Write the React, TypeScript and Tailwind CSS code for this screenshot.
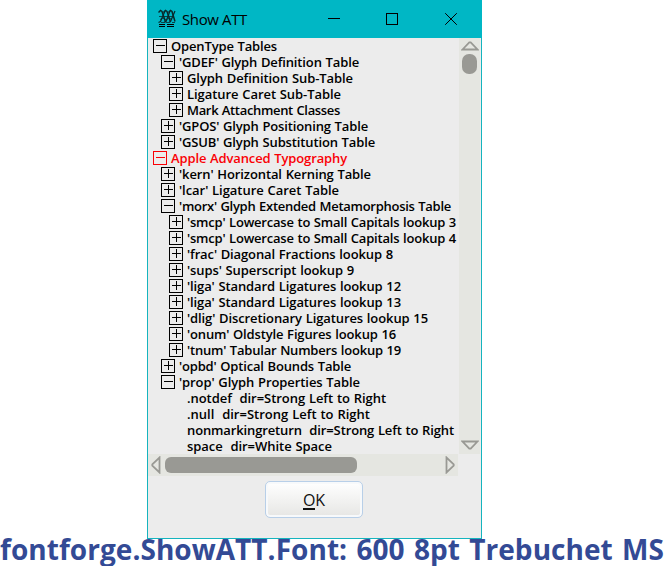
import { useLayoutEffect, useRef, useState } from "react";

type Row = { text: string; depth: number; width: number; state: "open" | "closed" | "leaf"; selected?: boolean };

const rows: Row[] = [
  { text: "OpenType Tables", depth: 0, width: 106, state: "open" },
  { text: "'GDEF' Glyph Definition Table", depth: 1, width: 180, state: "open" },
  { text: "Glyph Definition Sub-Table", depth: 2, width: 166, state: "closed" },
  { text: "Ligature Caret Sub-Table", depth: 2, width: 154, state: "closed" },
  { text: "Mark Attachment Classes", depth: 2, width: 153, state: "closed" },
  { text: "'GPOS' Glyph Positioning Table", depth: 1, width: 189, state: "closed" },
  { text: "'GSUB' Glyph Substitution Table", depth: 1, width: 196, state: "closed" },
  { text: "Apple Advanced Typography", depth: 0, width: 176, state: "open", selected: true },
  { text: "'kern' Horizontal Kerning Table", depth: 1, width: 192, state: "closed" },
  { text: "'lcar' Ligature Caret Table", depth: 1, width: 160, state: "closed" },
  { text: "'morx' Glyph Extended Metamorphosis Table", depth: 1, width: 272, state: "open" },
  { text: "'smcp' Lowercase to Small Capitals lookup 3", depth: 2, width: 269, state: "closed" },
  { text: "'smcp' Lowercase to Small Capitals lookup 4", depth: 2, width: 269, state: "closed" },
  { text: "'frac' Diagonal Fractions lookup 8", depth: 2, width: 206, state: "closed" },
  { text: "'sups' Superscript lookup 9", depth: 2, width: 167, state: "closed" },
  { text: "'liga' Standard Ligatures lookup 12", depth: 2, width: 214, state: "closed" },
  { text: "'liga' Standard Ligatures lookup 13", depth: 2, width: 214, state: "closed" },
  { text: "'dlig' Discretionary Ligatures lookup 15", depth: 2, width: 241, state: "closed" },
  { text: "'onum' Oldstyle Figures lookup 16", depth: 2, width: 209, state: "closed" },
  { text: "'tnum' Tabular Numbers lookup 19", depth: 2, width: 214, state: "closed" },
  { text: "'opbd' Optical Bounds Table", depth: 1, width: 172, state: "closed" },
  { text: "'prop' Glyph Properties Table", depth: 1, width: 181, state: "open" },
  { text: ".notdef  dir=Strong Left to Right", depth: 2, width: 199, state: "leaf" },
  { text: ".null  dir=Strong Left to Right", depth: 2, width: 183, state: "leaf" },
  { text: "nonmarkingreturn  dir=Strong Left to Right", depth: 2, width: 267, state: "leaf" },
  { text: "space  dir=White Space", depth: 2, width: 145, state: "leaf" },
];

const indents = ["pl-[5px]", "pl-[13px]", "pl-[21px]"];

// Tracks the letters of a single line so that it fills the given width.
function Fit({ text, width, className = "" }: { text: string; width: number; className?: string }) {
  const ref = useRef<HTMLSpanElement>(null);
  const [spacing, setSpacing] = useState(0);
  useLayoutEffect(() => {
    const el = ref.current;
    if (!el) return;
    el.style.letterSpacing = "0px";
    const next = (width - el.getBoundingClientRect().width) / text.length;
    el.style.letterSpacing = `${next}px`;
    setSpacing(next);
  }, [text, width]);
  return (
    <span ref={ref} className={`block w-fit whitespace-pre ${className}`} style={{ letterSpacing: `${spacing}px` }}>
      {text}
    </span>
  );
}

function Toggle({ state }: { state: Row["state"] }) {
  if (state === "leaf") return <span className="w-[14px] shrink-0" />;
  return (
    <svg className="h-[14px] w-[14px] shrink-0" viewBox="0 0 14 14" fill="none" stroke="currentColor" shapeRendering="crispEdges">
      <path d="M.5.5h13v13H.5zM3 6.5h9" />
      {state === "closed" && <path d="M7.5 2v9" />}
    </svg>
  );
}

function Arrow({ className }: { className: string }) {
  return (
    <svg className={`h-[10px] w-[18px] shrink-0 ${className}`} viewBox="0 0 18 10" fill="none" stroke="#999994" strokeWidth="1.8">
      <path d="M1.5 8.5 8.3 1.3h1.4L16.5 8.5z" />
    </svg>
  );
}

export default function App() {
  return (
    <div className="h-[566px] w-[664px] overflow-hidden bg-white font-['Open_Sans','Noto_Sans',sans-serif]">
      <div className="relative z-10 ml-[147px] flex h-[539px] w-[335px] flex-col border border-t-0 border-[#15b4be] bg-[#ececec]">
        <header className="-mx-px flex h-[38px] shrink-0 items-center bg-[#00b7c5] pl-[11px] text-black">
          <svg className="h-5 w-[18px]" viewBox="0 0 18 20" fill="none" stroke="#08282b" strokeWidth="1">
            <path d="M.5 3.5 2.5 1.5 4 2.5 7.5 13M5.500 3.500l2-2 1.500 1 3.500 10.500M10.500 3.500l2-2 1.500 1L17 12.500" strokeWidth="1.5" />
            <path d="M7 2 2.500 12.500l-2 1M12 2 8 12.500l-2 1M17 2l-4.500 10.500-1.500 1" strokeWidth="1.2" />
            <path d="M1 7.500h15M2 10.500l3-1.500 3 2 3-2 3 1.500M3 13.500h3m2 0h3m3 0h3" strokeWidth=".8" />
            <path d="M1 15.500h6m2 0h7M1 17.500h6m2 0h7" stroke="black" shapeRendering="crispEdges" />
          </svg>
          <Fit text="Show ATT" width={65} className="ml-[6px] -mt-px text-[15px] leading-5" />
          <div className="ml-auto flex items-center gap-[46px] pr-[25px]">
            <svg className="h-3 w-3" viewBox="0 0 12 12" stroke="black" shapeRendering="crispEdges"><path d="M0 5.5h12" /></svg>
            <svg className="h-3 w-3" viewBox="0 0 12 12" fill="none" stroke="black" shapeRendering="crispEdges"><path d="M.5.5h11v11H.5z" /></svg>
            <svg className="ml-px h-3 w-3" viewBox="0 0 12 12" stroke="black"><path d="m.2.2 11.6 11.6m0-11.6L.2 11.8" /></svg>
          </div>
        </header>
        <div className="flex h-[416px] shrink-0">
          <div className="w-[311px] overflow-hidden">
            {rows.map((row, i) => (
              <div key={i} className={`flex h-4 items-center gap-[4px] ${indents[row.depth]} ${row.selected ? "text-[#fa0005]" : "text-black"}`}>
                <Toggle state={row.state} />
                <Fit text={row.text} width={row.width} className="text-[13px] leading-4 font-semibold [word-spacing:0.5px]" />
              </div>
            ))}
          </div>
          <div className="flex w-[21px] flex-col items-center bg-[#e5e6e1] pt-[3px] pb-[4px]">
            <Arrow className="" />
            <div className="mt-[3px] h-5 w-[15px] rounded-[7px] bg-[#999994]" />
            <Arrow className="mt-auto rotate-180" />
          </div>
        </div>
        <div className="flex h-[22px] w-[310px] shrink-0 items-center bg-[#e5e6e1]">
          <svg className="ml-[3px] h-[18px] w-[10px]" viewBox="0 0 10 18" fill="none" stroke="#999994" strokeWidth="1.8"><path d="M8.5 1.5v15L1.3 9.7V8.3z" /></svg>
          <div className="ml-[4px] h-4 w-[192px] rounded-[6px] bg-[#999994]" />
          <svg className="mr-[3px] ml-auto h-[18px] w-[10px]" viewBox="0 0 10 18" fill="none" stroke="#999994" strokeWidth="1.8"><path d="M1.5 1.5v15l7.2-6.8V8.3z" /></svg>
        </div>
        <button className="mt-[5px] ml-[117px] flex h-[37px] w-[98px] items-center justify-center rounded-[5px] border border-[#b8cfe8] bg-linear-to-b from-white to-[#e6e6e4] pt-[3px] text-[16px] text-[#111] shadow-[inset_0_0_0_2px_#f7f9fb]">
          <span className="border-b-2 border-[#111] leading-[15px]">O</span><span className="border-b-2 border-transparent leading-[15px]">K</span>
        </button>
      </div>
      <div className="-mt-[6px] h-[33px] text-[#334a95]">
        <Fit text="fontforge.ShowATT.Font: 600 8pt Trebuchet MS" width={664} className="text-[28px] leading-[33px] font-bold [word-spacing:2px]" />
      </div>
    </div>
  );
}
